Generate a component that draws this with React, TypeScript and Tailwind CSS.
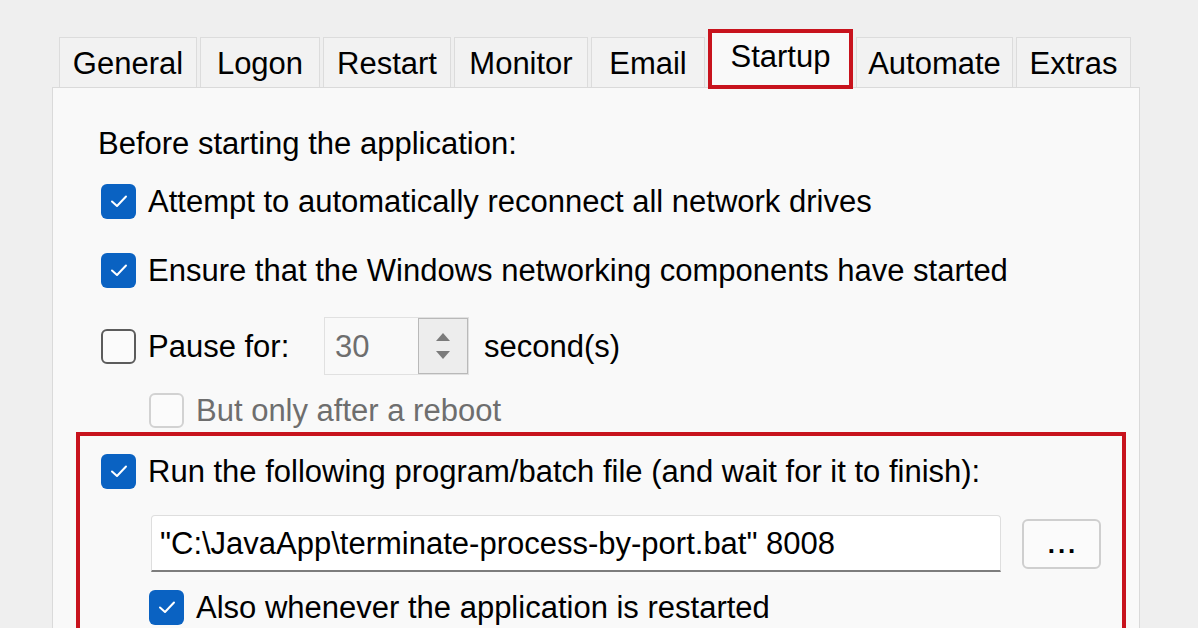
import React from "react";

const tabs = [
  { label: "General", w: "w-[138px]" },
  { label: "Logon", w: "w-[120px]" },
  { label: "Restart", w: "w-[128px]" },
  { label: "Monitor", w: "w-[134px]" },
  { label: "Email", w: "w-[114px]" },
  { label: "Startup", w: "w-[145px]", active: true },
  { label: "Automate", w: "w-[157px]" },
  { label: "Extras", w: "w-[115px]" },
];

const CheckBox = ({ checked = false, disabled = false }: { checked?: boolean; disabled?: boolean }) => {
  if (checked) {
    return (
      <div className="w-[35px] h-[35px] shrink-0 rounded-[6px] bg-[#0a62c2] flex items-center justify-center">
        <svg width="22" height="22" viewBox="0 0 22 22" fill="none">
          <path d="M4 11.5 L9 16 L18 6.5" stroke="#ffffff" strokeWidth="2" strokeLinecap="round" strokeLinejoin="round" />
        </svg>
      </div>
    );
  }
  return (
    <div
      className={`w-[35px] h-[35px] shrink-0 rounded-[6px] border-2 bg-[#fbfbfb] ${
        disabled ? "border-[#d2d2d2]" : "border-[#5c5c5c]"
      }`}
    />
  );
};

const Option = ({
  label,
  checked,
  disabled,
  className = "",
}: {
  label: string;
  checked?: boolean;
  disabled?: boolean;
  className?: string;
}) => (
  <div className={`flex items-center h-[40px] gap-[12px] ${className}`}>
    <CheckBox checked={checked} disabled={disabled} />
    <span className={disabled ? "text-[#6e6e6e]" : "text-black"}>{label}</span>
  </div>
);

export default function App() {
  return (
    <div
      className="h-[628px] w-[1198px] overflow-hidden bg-[#efefef] pt-[26px] pl-[52px] text-[31px] leading-none"
      style={{ fontFamily: '"Liberation Sans", Arial, sans-serif' }}
    >
      <div className="w-[1088px]">
        {/* tab strip */}
        <div className="flex items-end h-[61px] pl-[7px] gap-[3px]">
          {tabs.map((t) =>
            t.active ? (
              <div
                key={t.label}
                className={`${t.w} h-[60px] border-[4px] border-[#c8131d] bg-[#f9f9f9] flex items-center justify-center pb-[6px] -mb-[2px] relative z-10`}
              >
                {t.label}
              </div>
            ) : (
              <div
                key={t.label}
                className={`${t.w} h-[50px] border border-b-0 border-[#dcdcdc] bg-[#f2f2f2] flex items-center justify-center pt-[2px]`}
              >
                {t.label}
              </div>
            )
          )}
        </div>

        {/* page body */}
        <div className="h-[560px] bg-[#f9f9f9] border border-[#dadada] pt-[35px]">
          <div className="pl-[45px] h-[40px] flex items-center">Before starting the application:</div>

          <div className="pl-[48px] mt-[18px] flex flex-col">
            <Option checked label="Attempt to automatically reconnect all network drives" />
            <Option checked label="Ensure that the Windows networking components have started" className="mt-[29px]" />

            <div className="flex items-center h-[58px] mt-[27px]">
              <CheckBox />
              <span className="ml-[12px] w-[176px]">Pause for:</span>
              <div className="flex h-[58px] border border-[#e1e1e1] bg-[#f9f9f9]">
                <div className="w-[93px] flex items-center pl-[10px] text-[#6e6e6e]">30</div>
                <div className="w-[50px] border border-[#b9b9b9] bg-[#ededed] flex flex-col items-center justify-center gap-[10px]">
                  <svg width="14" height="8" viewBox="0 0 14 8">
                    <path d="M7 0 L14 8 L0 8 Z" fill="#7b7b7b" />
                  </svg>
                  <svg width="14" height="8" viewBox="0 0 14 8">
                    <path d="M0 0 L14 0 L7 8 Z" fill="#7b7b7b" />
                  </svg>
                </div>
              </div>
              <span className="ml-[15px]">second(s)</span>
            </div>

            <Option disabled label="But only after a reboot" className="ml-[48px] mt-[15px]" />
          </div>

          {/* highlighted program section */}
          <div className="ml-[23px] mt-[2px] w-[1050px] h-[220px] border-[4px] border-[#c8131d] pt-[15px] pl-[21px] pr-[21px]">
            <Option checked label="Run the following program/batch file (and wait for it to finish):" />
            <div className="flex items-center mt-[24px] ml-[50px]">
              <div className="w-[850px] h-[57px] bg-white border border-[#dedede] border-b-2 border-b-[#7d7d7d] rounded-t-[4px] flex items-center pl-[8px]">
                "C:\JavaApp\terminate-process-by-port.bat" 8008
              </div>
              <button className="ml-[21px] w-[79px] h-[50px] rounded-[6px] border-2 border-[#cfcfcf] bg-[#fbfbfb] flex items-end justify-center pb-[10px] text-[26px] font-bold tracking-[3px] pl-[3px]">
                ...
              </button>
            </div>
            <Option checked label="Also whenever the application is restarted" className="ml-[48px] mt-[15px]" />
          </div>
        </div>
      </div>
    </div>
  );
}
